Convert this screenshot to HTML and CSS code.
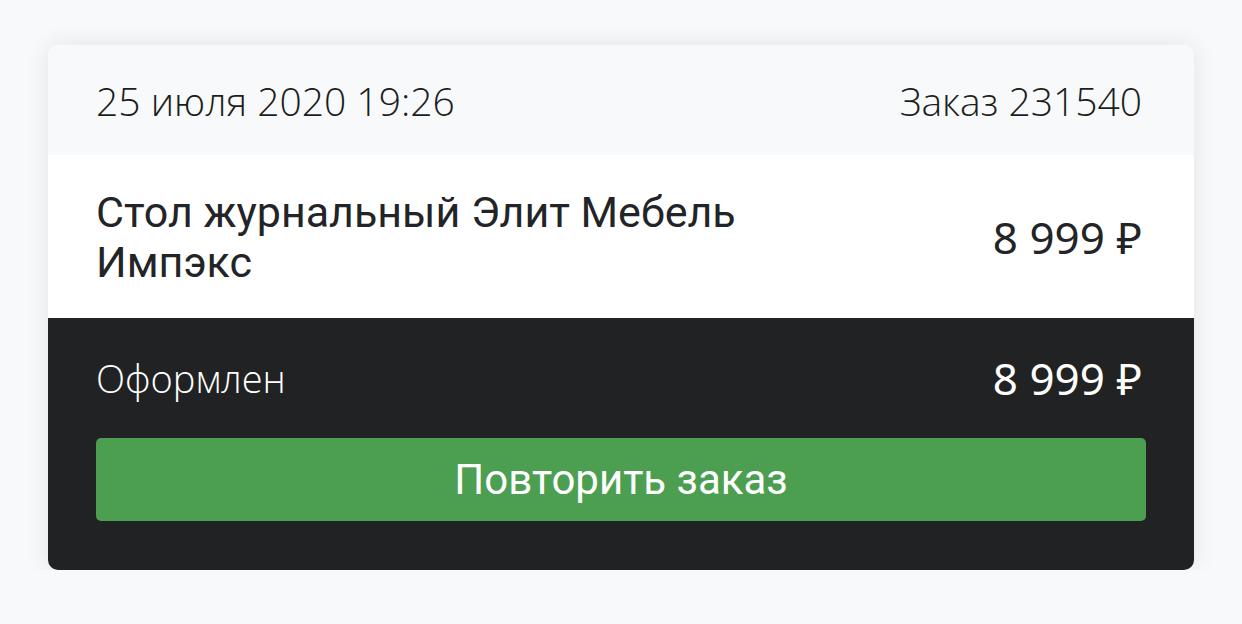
FILE: index.html
```html
<!DOCTYPE html>
<html lang="ru">
<head>
<meta charset="utf-8">
<title>Заказ 231540</title>
<link rel="stylesheet" href="styles.css">
</head>
<body>
<div class="card">
  <div class="card-head">
    <span class="head-text">25 июля 2020 19:26</span>
    <span class="head-text">Заказ 231540</span>
  </div>
  <div class="card-item">
    <div class="item-name">Стол журнальный Элит Мебель<br>Импэкс</div>
    <div class="price price-dark">8 999 ₽</div>
  </div>
  <div class="card-foot">
    <div class="foot-row">
      <span class="status">Оформлен</span>
      <span class="price price-light">8 999 ₽</span>
    </div>
    <button class="repeat-btn">Повторить заказ</button>
  </div>
</div>
</body>
</html>
```
FILE: styles.css
```css
html, body {
  margin: 0;
  padding: 0;
  background: #f8f9fb;
}
body {
  padding: 45px 48px 0 48px;
  font-family: "Open Sans", "Noto Sans", sans-serif;
}
.card {
  width: 1146px;
  border-radius: 10px;
  overflow: hidden;
  box-shadow: 0 0 24px rgba(0, 0, 0, 0.09);
  background: #ffffff;
}
.card-head {
  height: 110px;
  background: #f8f9fb;
  display: flex;
  align-items: center;
  justify-content: space-between;
  padding: 0 52px 0 48px;
  box-sizing: border-box;
}
.head-text {
  font-size: 39px;
  font-weight: 300;
  color: #1c1d20;
}
.card-item {
  height: 163px;
  box-sizing: border-box;
  display: flex;
  align-items: center;
  justify-content: space-between;
  padding: 0 52px 0 48px;
  background: #ffffff;
}
.item-name {
  font-family: Roboto, "Noto Sans", sans-serif;
  font-size: 43px;
  line-height: 50px;
  color: #232427;
}
.price {
  font-family: "Noto Sans", "Open Sans", sans-serif;
  font-size: 44px;
  font-weight: 400;
}
.price-dark {
  color: #232427;
}
.price-light {
  color: #ffffff;
}
.card-foot {
  background: #212224;
  padding: 34px 48px 49px 48px;
  display: flex;
  flex-direction: column;
  gap: 34px;
}
.foot-row {
  display: flex;
  align-items: center;
  justify-content: space-between;
  padding-right: 4px;
  height: 52px;
}
.status {
  font-size: 38px;
  font-weight: 300;
  color: #ffffff;
}
.repeat-btn {
  height: 83px;
  width: 100%;
  border: none;
  border-radius: 5px;
  background: #4c9f51;
  color: #ffffff;
  font-family: Roboto, "Noto Sans", sans-serif;
  font-size: 42px;
  cursor: pointer;
  padding: 0;
}
```
